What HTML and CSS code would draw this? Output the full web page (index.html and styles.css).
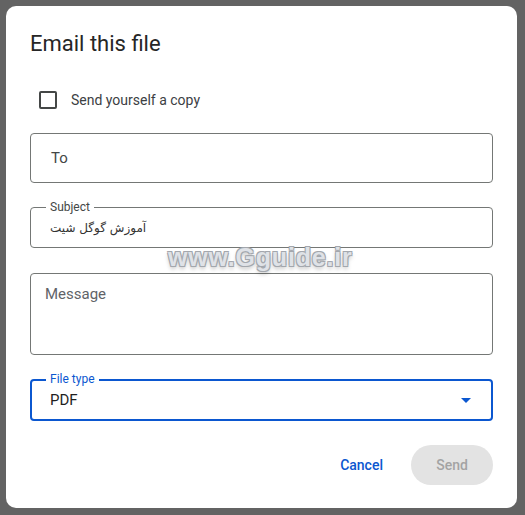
FILE: index.html
```html
<!DOCTYPE html>
<html lang="en">
<head>
    <meta charset="UTF-8">
    <meta name="viewport" content="width=device-width, initial-scale=1.0">
    <title>Email this file</title>
    <link rel="stylesheet" href="styles.css">
</head>
<body>
  <div class="backdrop">
    <div class="dialog">
        <h1 class="dialog-title">Email this file</h1>

        <label class="copy-row">
            <span class="checkbox"></span>
            <span>Send yourself a copy</span>
        </label>

        <div class="field field-to">
            <span class="placeholder">To</span>
        </div>

        <div class="field field-subject">
            <span class="field-label">Subject</span>
            <span class="field-value" dir="rtl">آموزش گوگل شیت</span>
        </div>

        <div class="field field-message">
            <span class="placeholder">Message</span>
        </div>

        <div class="field field-type">
            <span class="field-label">File type</span>
            <span class="field-value">PDF</span>
            <svg class="arrow" width="10" height="5" viewBox="0 0 10 5"><path d="M0 0h10L5 5z" fill="#0b57d0"/></svg>
        </div>

        <div class="actions">
            <button class="btn btn-cancel">Cancel</button>
            <button class="btn btn-send" disabled>Send</button>
        </div>

        <div class="watermark">www.Gguide.ir</div>
    </div>
  </div>
</body>
</html>
```

FILE: styles.css
```css
* {
    margin: 0;
    padding: 0;
    box-sizing: border-box;
}

body {
    font-family: Roboto, "DejaVu Sans", sans-serif;
    background-color: #636363;
}

.backdrop {
    width: 525px;
    height: 515px;
    padding: 6px 8px 7px 6px;
}

/* Dialog */
.dialog {
    position: relative;
    background: white;
    border-radius: 10px;
    height: 502px;
    padding: 22px 24px 0 24px;
    display: flex;
    flex-direction: column;
}

.dialog-title {
    font-size: 22px;
    font-weight: 400;
    line-height: 32px;
    color: #262626;
}

.copy-row {
    display: flex;
    align-items: center;
    gap: 14px;
    margin-top: 30px;
    padding-left: 9px;
    font-size: 14px;
    color: #3c4043;
    height: 20px;
}

.checkbox {
    width: 18px;
    height: 18px;
    border: 2px solid #444746;
    border-radius: 2px;
}

/* Fields */
.field {
    position: relative;
    border: 1px solid #747775;
    border-radius: 4px;
    display: flex;
    align-items: center;
}

.field-to {
    margin-top: 23px;
    height: 50px;
    padding-left: 20px;
}

.field-subject {
    margin-top: 24px;
    height: 41px;
    padding-left: 19px;
}

.field-message {
    margin-top: 25px;
    height: 82px;
    padding: 11px 14px;
    align-items: flex-start;
}

.field-type {
    margin-top: 24px;
    height: 42px;
    padding-left: 18px;
    border: 2px solid #0b57d0;
}

.placeholder {
    font-size: 15px;
    color: #444746;
}

.field-message .placeholder {
    color: #5f6368;
}

.field-label {
    position: absolute;
    top: -9px;
    left: 15px;
    padding: 0 4px;
    background: white;
    font-size: 12px;
    line-height: 16px;
    color: #444746;
}

.field-type .field-label {
    left: 14px;
    top: -10px;
    color: #0b57d0;
}

.field-value {
    font-size: 14px;
    color: #1f1f1f;
}

.field-subject .field-value {
    font-family: "DejaVu Sans", sans-serif;
    font-size: 12px;
    color: #333;
}

.field-type .field-value {
    font-size: 15px;
}

.arrow {
    position: absolute;
    right: 20px;
    top: 17px;
}

/* Buttons */
.actions {
    display: flex;
    justify-content: flex-end;
    align-items: center;
    gap: 28px;
    margin-top: 24px;
}

.btn {
    border: none;
    background: none;
    font-family: Roboto, sans-serif;
    font-size: 14px;
    font-weight: 500;
    cursor: pointer;
}

.btn-cancel {
    color: #0b57d0;
}

.btn-send {
    width: 82px;
    height: 40px;
    border-radius: 20px;
    background-color: #e3e3e3;
    color: #a3a3a3;
}

.watermark {
    position: absolute;
    left: 162px;
    top: 237px;
    font-family: "Liberation Sans", Arial, sans-serif;
    font-size: 25px;
    font-weight: bold;
    letter-spacing: 0.8px;
    color: #dfe2e7;
    text-shadow: -1px -1px 0 #a3a7ad, 1px -1px 0 #a3a7ad, -1px 1px 0 #a3a7ad, 1px 1px 0 #a3a7ad, 0 3px 4px rgba(0, 0, 0, 0.25);
}
```
